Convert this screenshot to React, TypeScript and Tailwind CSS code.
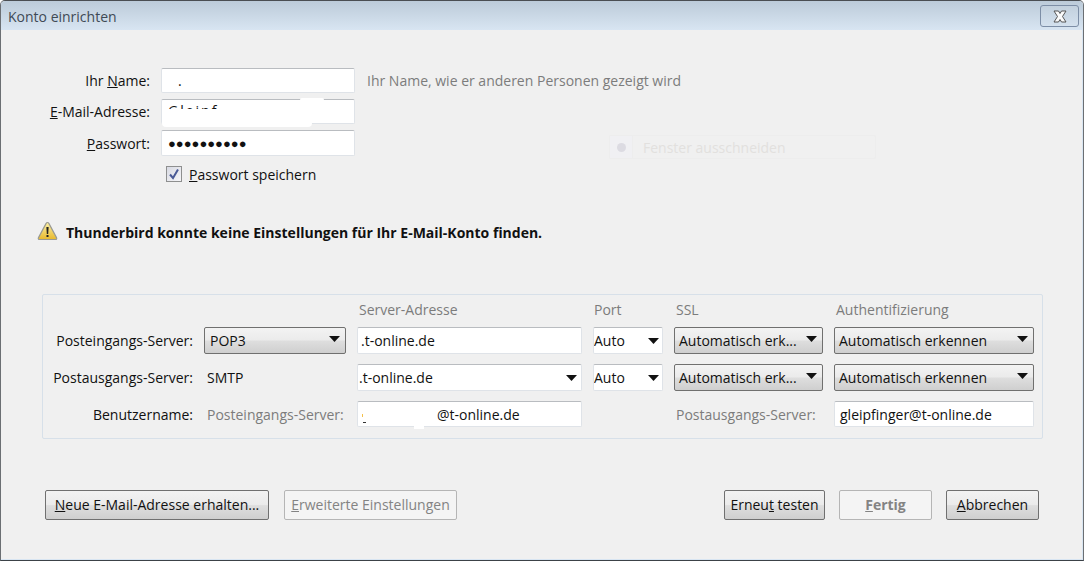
import type { ReactNode } from "react";

function Caret() {
  return (
    <svg className="h-[6px] w-[11px] shrink-0" viewBox="0 0 11 6" aria-hidden>
      <path d="M0 0h11L5.500 6z" fill="#111" />
    </svg>
  );
}

function Field({ children, className = "" }: { children?: ReactNode; className?: string }) {
  return (
    <div
      className={`relative flex items-center overflow-hidden whitespace-nowrap rounded-[2px] border border-[#dfe3e8] border-t-[#b9bcc0] bg-white text-[#111] ${className}`}
    >
      {children}
    </div>
  );
}

function Dropdown({ label, className = "" }: { label: string; className?: string }) {
  return (
    <div
      className={`flex h-[27px] items-center justify-between rounded-[2px] border border-[#70706f] bg-[linear-gradient(#f3f3f3,#ebebeb_48%,#dedede_52%,#cfcfcf)] pl-[4px] pr-[5px] text-[#111] ${className}`}
    >
      <span className="whitespace-nowrap">{label}</span>
      <span className="mb-[3px]">
        <Caret />
      </span>
    </div>
  );
}

function PushButton({
  children,
  disabled = false,
  className = "",
}: {
  children: ReactNode;
  disabled?: boolean;
  className?: string;
}) {
  return (
    <button
      className={`flex h-[30px] items-center justify-center whitespace-nowrap rounded-[2px] border ${
        disabled
          ? "border-[#b5b5b5] bg-[#f4f4f4] text-[#838383]"
          : "border-[#707070] bg-[linear-gradient(#f2f2f2,#ebebeb_48%,#dedede_52%,#cfcfcf)] text-[#111]"
      } ${className}`}
    >
      {children}
    </button>
  );
}

export default function App() {
  return (
    <div className="flex h-[561px] w-[1084px] flex-col overflow-hidden rounded-t-[5px] border-x border-b border-t border-x-[#6b6f73] border-b-[#3c4248] border-t-[#4a4e52] bg-[#f0f0f0] font-['Open_Sans','Noto_Sans',sans-serif] text-[14px] leading-none text-[#111]">
      <header className="flex h-[29px] shrink-0 items-start justify-between bg-gradient-to-b from-[#bccbd9] to-[#d8e5f2] pl-[7px] pr-[4px]">
        <span className="mt-[9px] text-[#3f4a55]">Konto einrichten</span>
        <button className="mt-[4px] flex h-[22px] w-[39px] items-center justify-center rounded-[3px] border border-[#7d8ea6] bg-gradient-to-b from-[#c2d0dd] to-[#d4e1ee]">
          <svg className="h-[13px] w-[14px]" viewBox="0 0 14 13" aria-hidden>
            <path
              d="M1 1h4.500L7 3.500 8.500 1H13L9.500 6.500 13 12H8.500L7 9.500 5.500 12H1l3.500-5.500z"
              fill="#fafafa"
              stroke="#555"
              strokeWidth="1"
            />
          </svg>
        </button>
      </header>

      <main className="flex flex-1 flex-col shadow-[inset_-1px_-1px_0_#d8e5f2]">
        <section className="mt-[38px] grid grid-cols-[149px_194px_auto] grid-rows-[25px_25px_26px] items-center gap-x-[11px] gap-y-[6px]">
          <div className="text-right">
            Ihr <u>N</u>ame:
          </div>
          <Field className="h-full pl-[16px]">.</Field>
          <div className="pl-[1px] text-[#7c7c7c]">Ihr Name, wie er anderen Personen gezeigt wird</div>
          <div className="text-right">
            <u>E</u>-Mail-Adresse:
          </div>
          <Field className="h-full pl-[6px]">
            <span className="mb-[1px] tracking-[2px]">Gleipf</span>
            <span className="absolute inset-x-0 bottom-0 top-[9px] bg-white" />
          </Field>
          <div />
          <div className="pt-[2px] text-right">
            <u>P</u>asswort:
          </div>
          <Field className="h-full pl-[6px]">
            <span className="text-[13px]">●●●●●●●●●●</span>
          </Field>
          <div />
        </section>

        <label className="ml-[165px] mt-[10px] flex h-[16px] items-center gap-[7px]">
          <span className="flex h-[16px] w-[16px] items-center justify-center border border-[#8e8f8f] bg-gradient-to-br from-[#d8dae3] to-[#f6f6f8]">
            <svg className="h-[12px] w-[12px]" viewBox="0 0 12 12" aria-hidden>
              <path d="M2 6.500l3 3.500L10 1.500" fill="none" stroke="#4a5a96" strokeWidth="2" />
            </svg>
          </span>
          <span className="mt-[2px]">
            <u>P</u>asswort speichern
          </span>
        </label>

        <section className="ml-[36px] mt-[38px] flex h-[22px] items-center gap-[8px]">
          <svg className="h-[20px] w-[21px]" viewBox="0 0 21 20" aria-hidden>
            <defs>
              <linearGradient id="warn" x1="0" y1="0" x2="0" y2="1">
                <stop offset="0" stopColor="#fbf0a6" />
                <stop offset="1" stopColor="#e8b92c" />
              </linearGradient>
            </defs>
            <path
              d="M10.500 1.500c.7 0 1.100.4 1.500 1.100l7.500 14c.5 1 .1 1.900-1 1.900h-16c-1.100 0-1.500-.9-1-1.900l7.500-14c.4-.7.800-1.100 1.500-1.100z"
              fill="url(#warn)"
              stroke="#9a9a92"
              strokeWidth="1.200"
            />
            <path d="M9.400 6h2.200l-.4 7H9.800z" fill="#222" />
            <rect x="9.500" y="14" width="2" height="2" fill="#222" />
          </svg>
          <span className="pt-[4px] font-bold">Thunderbird konnte keine Einstellungen für Ihr E-Mail-Konto finden.</span>
        </section>

        <section className="ml-[41px] mt-[52px] grid h-[145px] w-[1001px] grid-cols-[150px_142px_225px_70px_149px_200px] grid-rows-[15px_27px_27px_26px] items-center gap-x-[11px] gap-y-[10px] rounded-[2px] border border-[#d7e0e9] pt-[7px]">
          <div />
          <div />
          <div className="pl-[2px] text-[#7c7c7c]">Server-Adresse</div>
          <div className="pl-[1px] text-[#7c7c7c]">Port</div>
          <div className="pl-[2px] text-[#7c7c7c]">SSL</div>
          <div className="pl-[2px] text-[#7c7c7c]">Authentifizierung</div>

          <div className="text-right">Posteingangs-Server:</div>
          <Dropdown label="POP3" className="pl-[5px]" />
          <Field className="h-full pl-[3px]">.t-online.de</Field>
          <Field className="h-full justify-between pr-[3px]">
            Auto
            <Caret />
          </Field>
          <Dropdown label="Automatisch erk..." />
          <Dropdown label="Automatisch erkennen" />

          <div className="text-right">Postausgangs-Server:</div>
          <div className="pl-[3px]">SMTP</div>
          <Field className="h-full justify-between pl-[1px] pr-[4px]">
            .t-online.de
            <Caret />
          </Field>
          <Field className="h-full justify-between pr-[3px]">
            Auto
            <Caret />
          </Field>
          <Dropdown label="Automatisch erk..." />
          <Dropdown label="Automatisch erkennen" />

          <div className="pt-[2px] text-right">Benutzername:</div>
          <div className="pl-[3px] pt-[2px] text-[#7c7c7c]">Posteingangs-Server:</div>
          <Field className="h-full pl-[79px] pt-[2px]">
            <span className="absolute left-[4px] top-[12px] h-[3px] w-[1px] bg-[#f5c04a]" />
            <span className="absolute bottom-[3px] left-[5px] h-[1px] w-[3px] bg-[#333]" />
            @t-online.de
          </Field>
          <div />
          <div className="pl-[2px] pt-[2px] text-[#7c7c7c]">Postausgangs-Server:</div>
          <Field className="h-full pl-[5px] pt-[2px]">gleipfinger@t-online.de</Field>
        </section>

        <footer className="ml-[44px] mr-[44px] mt-[51px] flex items-center">
          <PushButton className="w-[224px]">
            <span>
              <u>N</u>eue E-Mail-Adresse erhalten...
            </span>
          </PushButton>
          <PushButton disabled className="ml-[15px] w-[173px]">
            <span>
              <u>E</u>rweiterte Einstellungen
            </span>
          </PushButton>
          <div className="flex-1" />
          <PushButton className="w-[101px]">
            <span>
              Erneu<u>t</u> testen
            </span>
          </PushButton>
          <PushButton disabled className="ml-[14px] w-[93px] font-bold">
            <span>
              <u>F</u>ertig
            </span>
          </PushButton>
          <PushButton className="ml-[14px] w-[93px]">
            <span>
              <u>A</u>bbrechen
            </span>
          </PushButton>
        </footer>
      </main>

      {/* leftovers of the blanked-out address, spilling past the field */}
      <div className="absolute left-[162px] top-[122px] h-[5px] w-[150px] rounded-b-[4px] bg-white" />
      <div className="absolute left-[300px] top-[98px] h-[2px] w-[24px] rounded-t-[2px] bg-white" />
      <div className="absolute left-[414px] top-[426px] h-[3px] w-[10px] bg-white" />

      {/* faint ghost of another window's button showing through */}
      <div className="absolute left-[609px] top-[135px] flex h-[24px] w-[267px] items-center rounded-[2px] border border-[#ededed]">
        <span className="flex h-full w-[23px] items-center justify-center border-r border-[#ededed] bg-[#f0f0f3]">
          <span className="h-[9px] w-[9px] rounded-full bg-[#dcdbe2]" />
        </span>
        <span className="ml-[10px] mt-[2px] text-[#e2e0de]">Fenster ausschneiden</span>
      </div>
    </div>
  );
}
